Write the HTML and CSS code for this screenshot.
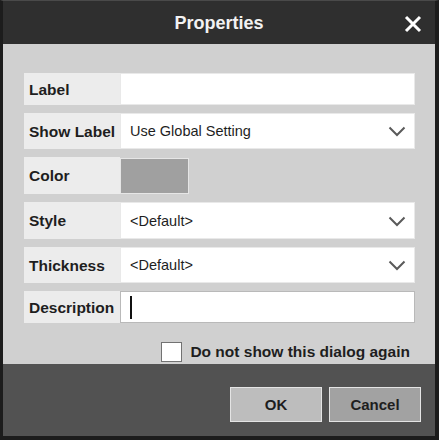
FILE: index.html
```html
<!DOCTYPE html>
<html>
<head>
<meta charset="utf-8">
<link rel="stylesheet" href="styles.css">
</head>
<body>
<div class="dialog">
  <div class="titlebar">
    <span></span>
    <span class="title">Properties</span>
    <span class="close">
      <svg width="18" height="18" viewBox="0 0 18 18"><path d="M2 2 L16 16 M16 2 L2 16" stroke="#fff" stroke-width="3" fill="none"/></svg>
    </span>
  </div>
  <div class="body">
    <div class="form">
      <div class="row row-s">
        <div class="key">Label</div>
        <div class="val"></div>
      </div>
      <div class="row row-m">
        <div class="key">Show Label</div>
        <div class="val select"><span>Use Global Setting</span><svg class="chev" width="18" height="11" viewBox="0 0 18 11"><path d="M1.5 1.5 L9 9 L16.5 1.5" stroke="#5a5a5a" stroke-width="2" fill="none"/></svg></div>
      </div>
      <div class="row row-l">
        <div class="key">Color</div>
        <div class="swatch"></div>
      </div>
      <div class="row row-l">
        <div class="key">Style</div>
        <div class="val select"><span>&lt;Default&gt;</span><svg class="chev" width="18" height="11" viewBox="0 0 18 11"><path d="M1.5 1.5 L9 9 L16.5 1.5" stroke="#5a5a5a" stroke-width="2" fill="none"/></svg></div>
      </div>
      <div class="row row-m">
        <div class="key">Thickness</div>
        <div class="val select"><span>&lt;Default&gt;</span><svg class="chev" width="18" height="11" viewBox="0 0 18 11"><path d="M1.5 1.5 L9 9 L16.5 1.5" stroke="#5a5a5a" stroke-width="2" fill="none"/></svg></div>
      </div>
      <div class="row row-s">
        <div class="key">Description</div>
        <div class="val input"><span class="caret"></span></div>
      </div>
    </div>
    <div class="dont-show">
      <span class="checkbox"></span>
      <span class="cb-text">Do not show this dialog again</span>
    </div>
  </div>
  <div class="footer">
    <button class="btn btn-ok">OK</button>
    <button class="btn btn-cancel">Cancel</button>
  </div>
</div>
</body>
</html>
```

FILE: styles.css
```css
* { box-sizing: border-box; }
html, body { margin: 0; padding: 0; background: #1c1c1c; }
body { font-family: "Liberation Sans", Arial, sans-serif; }

.dialog {
  width: 439px;
  height: 440px;
  border-top: 1px solid #4a4a4a;
  border-left: 3px solid #1c1c1c;
  border-right: 4px solid #1c1c1c;
  border-bottom: 4px solid #1c1c1c;
  display: flex;
  flex-direction: column;
  background: #d0d0d0;
}

.titlebar {
  height: 43px;
  background: #2f2f2f;
  display: grid;
  grid-template-columns: 1fr auto 1fr;
  align-items: center;
}
.title {
  color: #f2f2f2;
  font-weight: bold;
  font-size: 18px;
  padding-top: 2px;
}
.close {
  justify-self: end;
  padding-right: 13px;
  display: flex;
  padding-top: 3px;
}

.body {
  height: 320px;
  background: #d0d0d0;
  padding: 29px 20px 0 21px;
}
.form {
  display: flex;
  flex-direction: column;
  gap: 8px;
}
.row {
  display: flex;
  align-items: stretch;
}
.row-s { height: 32px; }
.row-m { height: 36px; }
.row-l { height: 37px; }

.key {
  width: 96px;
  background: #ececec;
  color: #1e1e1e;
  font-weight: bold;
  font-size: 15.5px;
  padding-left: 5px;
  padding-top: 1px;
  display: flex;
  align-items: center;
  white-space: nowrap;
}
.val {
  flex: 1;
  background: #fff;
  border: 1px solid #e9e9e9;
  display: flex;
  align-items: center;
  padding-left: 9px;
  font-size: 14.5px;
  color: #1e1e1e;
}
.select { justify-content: space-between; padding-right: 8px; }
.chev { display: block; margin-top: 1px; }
.input { border-color: #b9b9b9; }
.caret {
  display: block;
  width: 2px;
  height: 23px;
  background: #111;
}
.swatch {
  width: 69px;
  height: 36px;
  background: #a0a0a0;
  border: 1px solid #e6e6e6;
  margin-top: 1px;
}

.dont-show {
  margin-top: 19px;
  display: flex;
  justify-content: flex-end;
  align-items: center;
  gap: 8px;
  padding-right: 5px;
}
.checkbox {
  width: 21px;
  height: 20px;
  background: #fff;
  border: 1px solid #727272;
}
.cb-text {
  font-size: 15.5px;
  font-weight: bold;
  color: #1e1e1e;
}

.footer {
  flex: 1;
  background: #525252;
  display: flex;
  justify-content: flex-end;
  align-items: flex-start;
  gap: 7px;
  padding: 23px 14px 0 0;
}
.btn {
  width: 92px;
  height: 35px;
  border: 1px solid #e4e4e4;
  font-family: "Liberation Sans", Arial, sans-serif;
  font-weight: bold;
  font-size: 15px;
  color: #1e1e1e;
  padding: 0;
}
.btn-ok { background: #bdbdbd; }
.btn-cancel { background: #a2a2a2; }
```
